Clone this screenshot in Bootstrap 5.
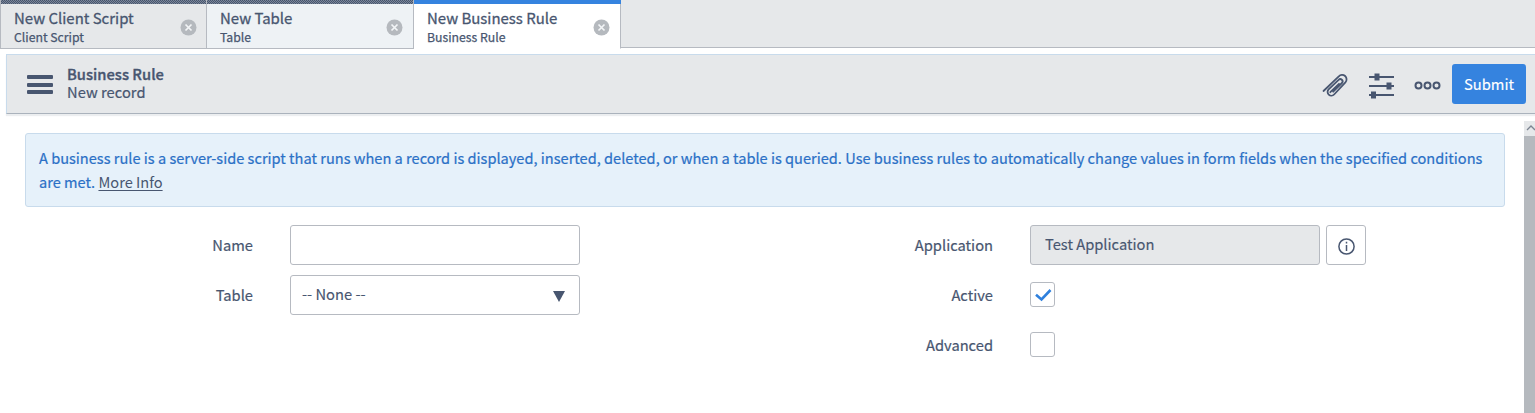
<!DOCTYPE html>
<html lang="en">
<head>
<meta charset="utf-8">
<title>New Business Rule</title>
<link href="https://cdn.jsdelivr.net/npm/bootstrap@5.3.0/dist/css/bootstrap.min.css" rel="stylesheet">
<style>
:root{--ink:#485670;--line:#b6bac1;--sky:#c8dbec;--panel:#e6e8ea;--blue:#3583df}
body{font-family:"Noto Sans CJK SC","Source Sans Pro",sans-serif;font-size:14.7px;line-height:24px;color:var(--ink);background:#fff;height:413px;overflow:hidden}
.tabs{height:49px}
.tab{width:206px;height:49px;border-right:1px solid var(--line);border-bottom:1px solid var(--line);background:var(--panel);padding:6px 9px 0 13px;position:relative;white-space:nowrap}
.tab:first-child{width:207px;border-left:1px solid var(--line)}
.tab.lit,.tab.current{width:207px}
.tab::before{content:"";position:absolute;left:0;right:0;top:0;height:4px;background:repeating-conic-gradient(#47556f 0 25%,#7c8798 0 50%) 0 0/2px 2px}
.tab.lit{background:#eef2f5;padding-right:10px}
.tab.current{background:#fff;border-bottom-color:#fff;padding-right:10px}
.tab.current::before{background:var(--blue);right:-1px}
.tab-name{font-size:14.95px;line-height:24px;height:22px;-webkit-text-stroke:.3px}
.tab-kind{font-size:12.25px;line-height:18px;-webkit-text-stroke:.25px}
.tab svg{margin-top:13px}
.rest{background:var(--panel);height:48px;border-bottom:1px solid var(--line)}
.head{margin:5px 0 0 6px;height:60px;background:var(--panel);border:1px solid var(--sky);border-right:0;border-bottom:1px solid #aab2bc;box-shadow:0 2px 1px #eceef0;padding:0 9px 0 20px}
.head-text{line-height:18px;margin:-3px 0 0 14px;letter-spacing:.03px;-webkit-text-stroke:.2px}
.head-title{-webkit-text-stroke:.35px}
.btn-send{background:var(--blue);color:#fff;width:74px;height:40px;border-radius:3px;font-size:14.7px;padding:0;border:0;margin-left:11px;-webkit-text-stroke:.15px}
.pane{height:299px;min-width:0;padding:19px 19px 0 25px}
.note{height:74px;border:1px solid var(--sky);border-radius:3px;background:#e6f1fa;color:#2b70c6;font-size:14.6px;padding:12px 13px 0;-webkit-text-stroke:.2px}
.note div{white-space:nowrap}
.note a{color:var(--ink);-webkit-text-stroke:0;text-underline-offset:2px;text-decoration-thickness:1px}
.fields{margin-top:18px}
.field{height:40px;margin-bottom:10px}
.lab{width:228px;text-align:right;margin-right:37px;-webkit-text-stroke:.2px}
.colright{margin-left:185px}
.box{width:290px;height:40px;border:1px solid var(--line);border-radius:3px;background:#fff;line-height:36px;padding:0 14px 0 12px;-webkit-text-stroke:.15px}
.chosen{margin:-3px 0 0 -1px}
.locked{background:var(--panel);padding-left:14px}
.info{width:40px;height:40px;border:1px solid var(--line);border-radius:3px;margin-left:6px;padding:3px 0 0}
.tick{width:25px;height:25px;border:1px solid var(--line);border-radius:3px;margin-top:-1px}
.bar{width:11px;height:292px;margin-top:7px;background:#b5b9be}
.bar-up{height:15px;background:var(--panel)}
</style>
</head>
<body class="d-flex flex-column">
<nav class="tabs d-flex align-items-start">
  <div class="tab d-flex justify-content-between"><div><div class="tab-name">New Client Script</div><div class="tab-kind">Client Script</div></div>
    <svg width="17" height="17" viewBox="0 0 17 17"><circle cx="8.5" cy="8.5" r="8" fill="#b5b9be"/><path d="M5.5 5.5l6 6M11.5 5.5l-6 6" stroke="#f3f5f7" stroke-width="1.7"/></svg></div>
  <div class="tab lit d-flex justify-content-between"><div><div class="tab-name">New Table</div><div class="tab-kind">Table</div></div>
    <svg width="17" height="17" viewBox="0 0 17 17"><circle cx="8.5" cy="8.5" r="8" fill="#b5b9be"/><path d="M5.5 5.5l6 6M11.5 5.5l-6 6" stroke="#f3f5f7" stroke-width="1.7"/></svg></div>
  <div class="tab current d-flex justify-content-between"><div><div class="tab-name">New Business Rule</div><div class="tab-kind">Business Rule</div></div>
    <svg width="17" height="17" viewBox="0 0 17 17"><circle cx="8.5" cy="8.5" r="8" fill="#b5b9be"/><path d="M5.5 5.5l6 6M11.5 5.5l-6 6" stroke="#f3f5f7" stroke-width="1.7"/></svg></div>
  <div class="rest flex-grow-1"></div>
</nav>
<header class="head d-flex align-items-center">
  <svg width="26" height="20" viewBox="0 0 26 20" fill="#485670"><rect y="1" width="26" height="4" rx="1"/><rect y="9" width="26" height="4" rx="1"/><rect y="16" width="26" height="4" rx="1"/></svg>
  <div class="head-text flex-grow-1"><div class="fw-medium head-title">Business Rule</div><div>New record</div></div>
  <svg class="mt-1" width="28" height="26" viewBox="0 0 28 26" fill="none" stroke="#485670" stroke-width="1.8" stroke-linecap="round" stroke-linejoin="round"><path d="M1.500 18L16.800 3.300a4.300 4.300 0 0 1 6.600 6L12.100 21.500a3.700 3.700 0 0 1-5.500-5.200L16.600 6.800a2.200 2.200 0 0 1 3.300 3.200L11.200 18.700M8.300 19.200l8.700-8.400"/></svg>
  <svg style="margin:4px 20px 0 19px" width="25" height="26" viewBox="0 0 25 26" fill="#485670"><path d="M0 3h25v2H0zM0 12h25v2H0zM0 21h25v2H0z"/><rect x="5.500" y="0.500" width="5" height="7"/><rect x="17.500" y="9.500" width="5" height="7"/><rect x="2" y="18.500" width="5" height="7"/></svg>
  <svg class="mt-1" width="27" height="10" viewBox="0 0 27 10" fill="none" stroke="#485670" stroke-width="2"><circle cx="4.500" cy="4.500" r="3"/><circle cx="13.500" cy="4.500" r="3"/><circle cx="22.500" cy="4.500" r="3"/></svg>
  <button class="btn btn-send">Submit</button>
</header>
<main class="d-flex">
  <div class="pane flex-grow-1">
    <div class="note"><div>A business rule is a server-side script that runs when a record is displayed, inserted, deleted, or when a table is queried. Use business rules to automatically change values in form fields when the specified conditions</div><div>are met. <a href="#">More Info</a></div></div>
    <div class="fields d-flex">
      <div>
        <div class="field d-flex align-items-center"><label class="lab">Name</label><div class="box"></div></div>
        <div class="field d-flex align-items-center"><label class="lab">Table</label><div class="box d-flex align-items-center justify-content-between"><span class="chosen">-- None --</span><svg width="12" height="11" viewBox="0 0 12 11" fill="#485670" style="margin-top:3px"><path d="M0 0h12L6 11z"/></svg></div></div>
      </div>
      <div class="colright">
        <div class="field d-flex align-items-center"><label class="lab">Application</label><div class="box locked">Test Application</div><button class="info btn d-flex align-items-center justify-content-center"><svg width="17" height="17" viewBox="0 0 17 17" fill="none" stroke="#485670" stroke-width="1.5"><circle cx="8.5" cy="8.5" r="7.600"/><path d="M8.5 7v6M8.500 3.700v1.800"/></svg></button></div>
        <div class="field d-flex align-items-center"><label class="lab">Active</label><div class="tick"><svg class="d-block" width="23" height="23" viewBox="0 0 23 23" fill="none" stroke="#2f80dd" stroke-width="2.6"><path d="M5 11.800l5.500 4.700 9-9.500"/></svg></div></div>
        <div class="field d-flex align-items-center"><label class="lab">Advanced</label><div class="tick"></div></div>
      </div>
    </div>
  </div>
  <div class="bar flex-shrink-0"><div class="bar-up"><svg class="d-block" width="11" height="15" viewBox="0 0 11 15" fill="none" stroke="#7c8491" stroke-width="1.3"><path d="M3 9l4-4 4 4"/></svg></div></div>
</main>
<script src="https://cdn.jsdelivr.net/npm/bootstrap@5.3.0/dist/js/bootstrap.bundle.min.js"></script>
</body>
</html>
